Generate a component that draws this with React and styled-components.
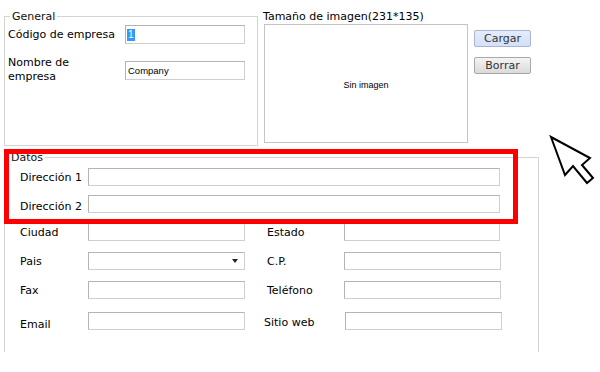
import React from "react";
import styled, { createGlobalStyle } from "styled-components";

const Global = createGlobalStyle`
  html, body { margin: 0; padding: 0; background: #fff; }
  body { font-family: "DejaVu Sans", Verdana, sans-serif; color: #000; }
`;

const Page = styled.div`
  position: relative;
  width: 600px;
  height: 372px;
  overflow: hidden;
  background: #fff;
`;

const TopRow = styled.div`
  display: flex;
  align-items: flex-start;
  padding: 10px 0 0 4px;
`;

const Group = styled.fieldset`
  box-sizing: border-box;
  margin: 0;
  min-width: 0;
  width: ${(p) => p.$w}px;
  height: ${(p) => p.$h}px;
  padding: ${(p) => p.$pad};
  border: 1px solid #d3d3d3;
  border-bottom: ${(p) => (p.$open ? "none" : "1px solid #d3d3d3")};
`;

const DatosGroup = styled(Group)`
  margin: 5px 0 0 4px;
`;

const Legend = styled.legend`
  padding: 0 2px;
  margin-left: ${(p) => p.$ml || 0}px;
  font-size: 11px;
  line-height: 13px;
  color: #111;
`;

const FieldRow = styled.div`
  display: flex;
  align-items: center;
  margin-top: ${(p) => p.$mt || 0}px;
  height: ${(p) => p.$h || 18}px;
`;

const Label = styled.div`
  flex: none;
  width: ${(p) => p.$w}px;
  margin-left: ${(p) => p.$ml || 0}px;
  padding-top: ${(p) => p.$pt || 0}px;
  font-size: 11px;
  line-height: ${(p) => p.$lh || 13}px;
  white-space: nowrap;
`;

const TextBox = styled.div`
  flex: none;
  box-sizing: border-box;
  display: flex;
  align-items: center;
  width: ${(p) => p.$w}px;
  height: ${(p) => p.$h || 18}px;
  margin-left: ${(p) => p.$ml || 0}px;
  padding: 0 1px;
  border: 1px solid;
  border-color: #b4b4b4 #cfcfcf #cfcfcf #b4b4b4;
  background: #fff;
  font-family: "Liberation Sans", Arial, sans-serif;
  font-size: 9.5px;
`;

const Selected = styled.span`
  display: inline-block;
  background: #3399ff;
  color: #fff;
  font-size: 10px;
  line-height: 12px;
  padding: 0 1px;
`;

const Value = styled.span`
  padding-left: 1px;
  color: #000;
`;

const Arrow = styled.svg`
  margin-left: auto;
  margin-right: 5px;
`;

const ImageArea = styled.div`
  display: flex;
  flex-direction: column;
  margin-left: 5px;
`;

const ImageTitle = styled.div`
  font-size: 11px;
  line-height: 14px;
  white-space: nowrap;
`;

const ImageBox = styled.div`
  box-sizing: border-box;
  width: 204px;
  height: 119px;
  margin-left: 1px;
  border: 1px solid #c4c4c4;
  display: flex;
  align-items: center;
  justify-content: center;
  font-family: "Liberation Sans", Arial, sans-serif;
  font-size: 9px;
  padding-top: 3px;
`;

const ButtonCol = styled.div`
  display: flex;
  flex-direction: column;
  gap: 10px;
  margin: 20px 0 0 6px;
`;

const Button = styled.button`
  box-sizing: border-box;
  width: 57px;
  height: 17px;
  padding: 0;
  border: 1px solid ${(p) => (p.$primary ? "#a9b6cc" : "#a8a8a8")};
  border-radius: 2px;
  background: ${(p) =>
    p.$primary
      ? "linear-gradient(#e4ecfc, #d3e0f8)"
      : "linear-gradient(#f4f4f4, #dadada)"};
  font-family: "DejaVu Sans", Verdana, sans-serif;
  font-size: 11px;
  line-height: 15px;
  color: #333;
`;

const Highlight = styled.div`
  position: absolute;
  left: 4px;
  top: 149px;
  width: 514px;
  height: 75px;
  box-sizing: border-box;
  border: 5px solid #ff0000;
  pointer-events: none;
`;

const Cursor = styled.svg`
  position: absolute;
  left: 540px;
  top: 125px;
`;

export default function App() {
  return (
    <Page>
      <Global />
      <TopRow>
        <Group $w={254} $h={136} $pad="2px 3px 0 3px">
          <Legend $ml={2}>General</Legend>
          <FieldRow $h={19}>
            <Label $w={117}>Código de empresa</Label>
            <TextBox $w={120} $h={19}>
              <Selected>1</Selected>
            </TextBox>
          </FieldRow>
          <FieldRow $mt={12} $h={28}>
            <Label $w={117} $lh={14}>
              Nombre de
              <br />
              empresa
            </Label>
            <TextBox $w={120} $h={19}>
              <Value>Company</Value>
            </TextBox>
          </FieldRow>
        </Group>
        <ImageArea>
          <ImageTitle>Tamaño de imagen(231*135)</ImageTitle>
          <ImageBox>Sin imagen</ImageBox>
        </ImageArea>
        <ButtonCol>
          <Button $primary>Cargar</Button>
          <Button>Borrar</Button>
        </ButtonCol>
      </TopRow>

      <DatosGroup $w={535} $h={201} $pad="4px 0 0 15px" $open>
        <Legend $ml={-11}>Datos</Legend>
        <FieldRow>
          <Label $w={68}>Dirección 1</Label>
          <TextBox $w={412} />
        </FieldRow>
        <FieldRow $mt={9}>
          <Label $w={68} $pt={5}>Dirección 2</Label>
          <TextBox $w={412} />
        </FieldRow>
        <FieldRow $mt={10}>
          <Label $w={68}>Ciudad</Label>
          <TextBox $w={157} />
          <Label $w={77} $ml={22}>Estado</Label>
          <TextBox $w={156} />
        </FieldRow>
        <FieldRow $mt={11}>
          <Label $w={68}>Pais</Label>
          <TextBox $w={157}>
            <Arrow width="6" height="4" viewBox="0 0 6 4">
              <path d="M0 0 L6 0 L3 4 Z" fill="#222" />
            </Arrow>
          </TextBox>
          <Label $w={77} $ml={22}>C.P.</Label>
          <TextBox $w={157} />
        </FieldRow>
        <FieldRow $mt={11}>
          <Label $w={68}>Fax</Label>
          <TextBox $w={157} />
          <Label $w={77} $ml={22}>Teléfono</Label>
          <TextBox $w={157} />
        </FieldRow>
        <FieldRow $mt={13}>
          <Label $w={68} $pt={6}>Email</Label>
          <TextBox $w={157} />
          <Label $w={81} $ml={19} $pt={2}>Sitio web</Label>
          <TextBox $w={157} />
        </FieldRow>
      </DatosGroup>

      <Highlight />
      <Cursor width="60" height="64" viewBox="540 125 60 64">
        <polygon
          points="551,137 565,175 573,166 587,183 593,178 582,165 590,158"
          fill="#fff"
          stroke="#000"
          strokeWidth="2"
          strokeLinejoin="miter"
        />
      </Cursor>
    </Page>
  );
}
